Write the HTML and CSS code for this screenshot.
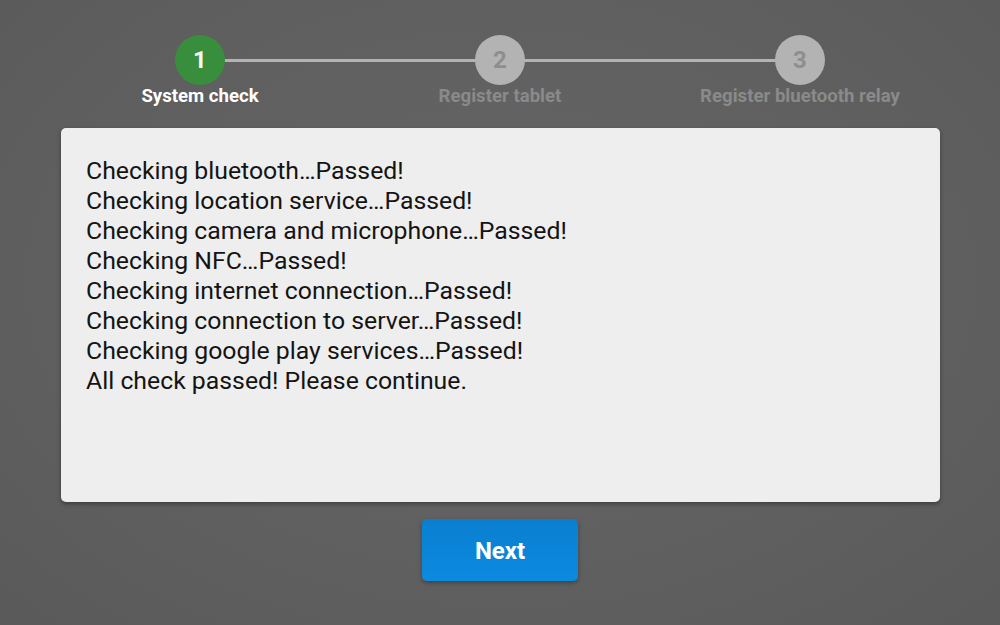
FILE: index.html
```html
<!DOCTYPE html>
<html lang="en">
<head>
    <meta charset="utf-8">
    <title>Setup - System check</title>
    <meta name="viewport" content="width=device-width, initial-scale=1">
    <link rel="stylesheet" href="styles.css">
</head>
<body>
    <div class="screen">
        <div class="stepper">
            <div class="step active">
                <div class="step-circle">1</div>
                <div class="step-label">System check</div>
            </div>
            <div class="step">
                <div class="step-circle">2</div>
                <div class="step-label">Register tablet</div>
            </div>
            <div class="step">
                <div class="step-circle">3</div>
                <div class="step-label">Register bluetooth relay</div>
            </div>
        </div>

        <div class="log-card">
            <p>Checking bluetooth…Passed!</p>
            <p>Checking location service…Passed!</p>
            <p>Checking camera and microphone…Passed!</p>
            <p>Checking NFC…Passed!</p>
            <p>Checking internet connection…Passed!</p>
            <p>Checking connection to server…Passed!</p>
            <p>Checking google play services…Passed!</p>
            <p>All check passed! Please continue.</p>
        </div>

        <button type="button" class="next-btn">Next</button>
    </div>
</body>
</html>
```

FILE: styles.css
```css
* {
    margin: 0;
    padding: 0;
    box-sizing: border-box;
}

html, body {
    height: 100%;
}

body {
    font-family: Roboto, 'Liberation Sans', Arial, sans-serif;
    background: radial-gradient(ellipse at 50% 45%, #666666 0%, #5e5e5e 70%, #5a5a5a 100%);
    overflow: hidden;
}

.screen {
    height: 100%;
    display: flex;
    flex-direction: column;
    align-items: center;
    padding-top: 35px;
}

.stepper {
    display: flex;
    width: 900px;
    position: relative;
}

.stepper::before {
    content: '';
    position: absolute;
    top: 24px;
    left: 150px;
    right: 150px;
    height: 3px;
    background: #b3b3b3;
}

.step {
    flex: 1;
    display: flex;
    flex-direction: column;
    align-items: center;
    position: relative;
    z-index: 1;
}

.step-circle {
    width: 50px;
    height: 50px;
    border-radius: 50%;
    background: #b3b3b3;
    color: #8e8e8e;
    font-size: 24px;
    font-weight: 700;
    display: flex;
    align-items: center;
    justify-content: center;
}

.step-label {
    font-size: 18.6px;
    font-weight: 700;
    line-height: 22px;
    color: #8a8a8a;
}

.step.active .step-circle {
    background: #388e3c;
    color: #f4f4f4;
}

.step.active .step-label {
    color: #ffffff;
}

.log-card {
    width: 879px;
    height: 374px;
    margin-top: 21px;
    margin-left: 1px;
    background: #eeeeee;
    border-radius: 5px;
    box-shadow: 0 2px 4px rgba(0, 0, 0, 0.35);
    padding: 28px 25px;
}

.log-card p {
    font-size: 24.8px;
    line-height: 30px;
    color: #141414;
}

.next-btn {
    margin-top: 17px;
    width: 156px;
    height: 62px;
    border: none;
    border-radius: 5px;
    background: linear-gradient(180deg, #0a7fd0 0%, #0b8ae0 100%);
    box-shadow: 0 2px 4px rgba(0, 0, 0, 0.3);
    color: #ffffff;
    font-family: Roboto, 'Liberation Sans', Arial, sans-serif;
    font-size: 24px;
    font-weight: 700;
    padding-top: 2px;
    cursor: pointer;
}
```
